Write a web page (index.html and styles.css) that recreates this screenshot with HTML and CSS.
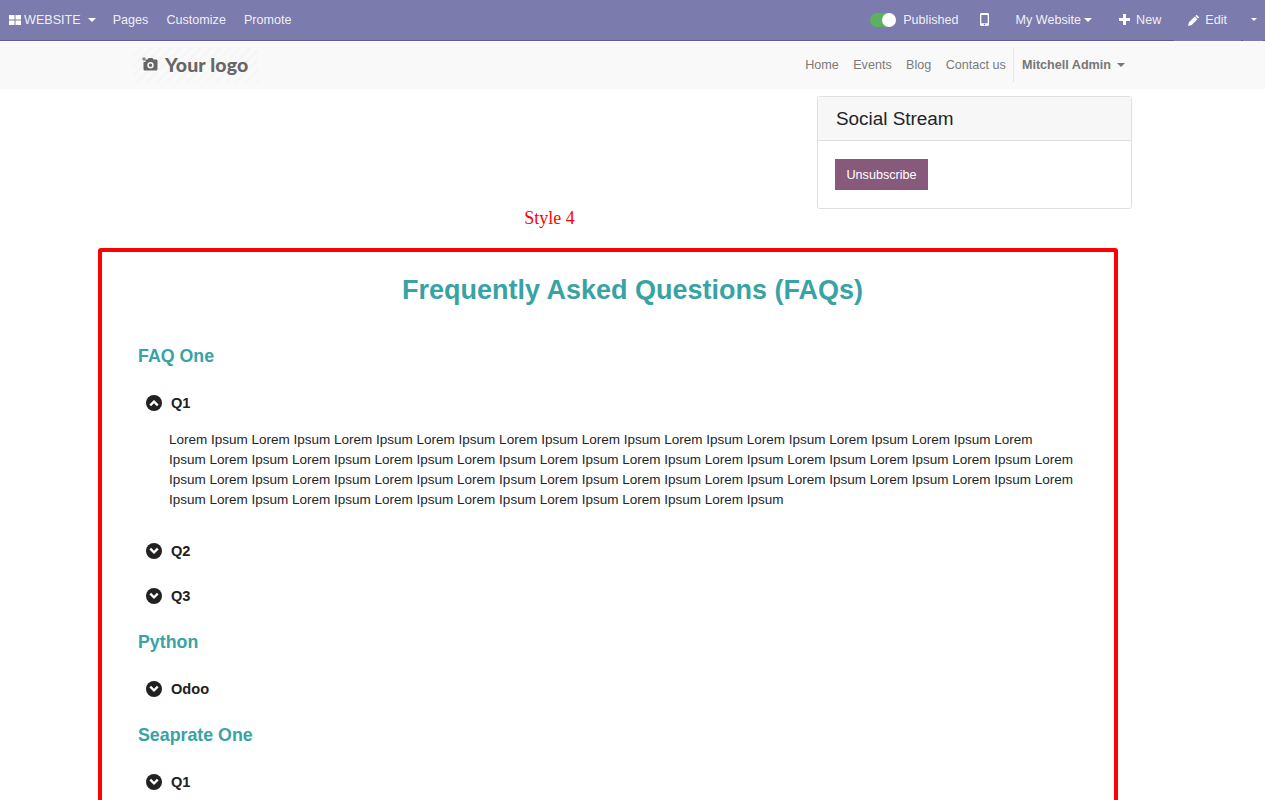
FILE: index.html
```html
<!DOCTYPE html>
<html lang="en">
<head>
<meta charset="utf-8">
<title>FAQ</title>
<link rel="stylesheet" href="styles.css">
</head>
<body>
<header>
  <nav class="topbar">
    <div class="topbar-left">
      <a class="top-item brand"><svg class="i-grid" width="12" height="10" viewBox="0 0 12 10"><rect x="0" y="0" width="5.5" height="4.5" fill="#fff"/><rect x="6.500" y="0" width="5.5" height="4.5" fill="#fff"/><rect x="0" y="5.5" width="5.5" height="4.5" fill="#fff"/><rect x="6.500" y="5.5" width="5.5" height="4.5" fill="#fff"/></svg>WEBSITE<span class="caret caret-brand"></span></a>
      <a class="top-item">Pages</a>
      <a class="top-item">Customize</a>
      <a class="top-item">Promote</a>
    </div>
    <div class="topbar-right">
      <a class="top-item publish"><span class="toggle"><span class="knob"></span></span>Published</a>
      <a class="top-item mobile"><svg width="9" height="13" viewBox="0 0 9 13"><path fill="#fff" fill-rule="evenodd" d="M1.400 0h6.200C8.400 0 9 .6 9 1.400v10.200c0 .8-.6 1.400-1.400 1.400H1.400C.6 13 0 12.400 0 11.600V1.400C0 .6.600 0 1.400 0zM1.300 2v8.300h6.400V2zM4.500 10.800a.8.8 0 1 0 0 1.600.8.8 0 0 0 0-1.600z"/></svg></a>
      <a class="top-item site">My Website<span class="caret caret-site"></span></a>
      <a class="top-item new"><svg width="11" height="11" viewBox="0 0 11 11"><path fill="#fff" d="M4 0h3v4h4v3H7v4H4V7H0V4h4z"/></svg>New</a>
      <a class="top-item edit"><svg width="12" height="12" viewBox="0 0 12 12"><path fill="#fff" d="M8.600.7l2.700 2.700-1.200 1.200-2.700-2.700zM6.700 2.600l2.700 2.700-5.700 5.700L0 12l1-3.700z"/></svg>Edit</a>
      <a class="top-item more"><span class="caret caret-small"></span></a>
    </div>
  </nav>
  <div class="sitebar">
    <div class="sitebar-inner">
      <a class="logo"><svg width="16" height="15" viewBox="0 0 16 15"><path fill="#666" fill-rule="evenodd" d="M5.500 2.500L6.500 1h4l1 1.500H14c.9 0 1.500.6 1.500 1.500v8c0 .9-.6 1.500-1.500 1.500H3c-.9 0-1.500-.6-1.500-1.500V5h2V2.500zM8.500 5a3.200 3.200 0 1 0 0 6.400 3.200 3.200 0 0 0 0-6.400zm0 1.500a1.700 1.700 0 1 1 0 3.400 1.700 1.700 0 0 1 0-3.400z"/><path fill="#666" d="M1.500 0h1v1.500H4v1H2.500V4h-1V2.500H0v-1h1.500z"/></svg><span class="logo-text">Your logo</span></a>
      <ul class="site-menu">
        <li><a>Home</a></li>
        <li><a>Events</a></li>
        <li><a>Blog</a></li>
        <li><a>Contact us</a></li>
        <li class="user"><a class="user-link">Mitchell Admin<span class="caret caret-user"></span></a></li>
      </ul>
    </div>
  </div>
</header>
<main>
  <div class="content">
    <aside class="card">
      <h3 class="card-head">Social Stream</h3>
      <div class="card-body"><button class="btn">Unsubscribe</button></div>
    </aside>
    <p class="style-label">Style 4</p>
  </div>
  <section class="faq-box">
    <h1 class="faq-title">Frequently Asked Questions (FAQs)</h1>
    <h2 class="faq-group first">FAQ One</h2>
    <div class="q"><svg class="chev" viewBox="0 0 16 16"><circle cx="8" cy="8" r="8" fill="#212121"/><path d="M3.400 9.500L8 4.900l4.600 4.600-1.700 1.700L8 8.300 5.100 11.200z" fill="#fff"/></svg>Q1</div>
    <p class="answer">Lorem Ipsum Lorem Ipsum Lorem Ipsum Lorem Ipsum Lorem Ipsum Lorem Ipsum Lorem Ipsum Lorem Ipsum Lorem Ipsum Lorem Ipsum Lorem<br>Ipsum Lorem Ipsum Lorem Ipsum Lorem Ipsum Lorem Ipsum Lorem Ipsum Lorem Ipsum Lorem Ipsum Lorem Ipsum Lorem Ipsum Lorem Ipsum Lorem<br>Ipsum Lorem Ipsum Lorem Ipsum Lorem Ipsum Lorem Ipsum Lorem Ipsum Lorem Ipsum Lorem Ipsum Lorem Ipsum Lorem Ipsum Lorem Ipsum Lorem<br>Ipsum Lorem Ipsum Lorem Ipsum Lorem Ipsum Lorem Ipsum Lorem Ipsum Lorem Ipsum Lorem Ipsum</p>
    <div class="q"><svg class="chev" viewBox="0 0 16 16"><circle cx="8" cy="8" r="8" fill="#212121"/><path d="M3.400 6.500L8 11.100l4.600-4.600-1.700-1.700L8 7.700 5.100 4.800z" fill="#fff"/></svg>Q2</div>
    <div class="q"><svg class="chev" viewBox="0 0 16 16"><circle cx="8" cy="8" r="8" fill="#212121"/><path d="M3.400 6.500L8 11.100l4.600-4.600-1.700-1.700L8 7.700 5.100 4.800z" fill="#fff"/></svg>Q3</div>
    <h2 class="faq-group">Python</h2>
    <div class="q"><svg class="chev" viewBox="0 0 16 16"><circle cx="8" cy="8" r="8" fill="#212121"/><path d="M3.400 6.500L8 11.100l4.600-4.600-1.700-1.700L8 7.700 5.100 4.800z" fill="#fff"/></svg>Odoo</div>
    <h2 class="faq-group">Seaprate One</h2>
    <div class="q"><svg class="chev" viewBox="0 0 16 16"><circle cx="8" cy="8" r="8" fill="#212121"/><path d="M3.400 6.500L8 11.100l4.600-4.600-1.700-1.700L8 7.700 5.100 4.800z" fill="#fff"/></svg>Q1</div>
  </section>
</main>
</body>
</html>
```
FILE: styles.css
```css
* { box-sizing: border-box; }
html, body { margin: 0; padding: 0; }
body { font-family: "Liberation Sans", Arial, sans-serif; font-size: 13.5px; color: #212529; background: #fff; }
a { color: inherit; text-decoration: none; }

.topbar { height: 41px; background: linear-gradient(to right, #5f5e97 1174px, transparent 1174px 1241px, #5f5e97 1241px 1243px, transparent 1243px 1263px, #5f5e97 1263px) bottom / 100% 1px no-repeat, #7c7bad; display: flex; justify-content: space-between; color: #fff; font-size: 12.6px; }
.topbar-left, .topbar-right { display: flex; align-items: center; height: 40px; padding-bottom: 1px; }
.top-item { display: flex; align-items: center; color: rgba(255,255,255,.9); white-space: nowrap; }
.brand { margin-left: 9px; margin-right: 17px; }
.i-grid { margin-right: 3px; }
.caret { display: inline-block; width: 0; height: 0; border-top: 4px solid #fff; border-left: 4px solid transparent; border-right: 4px solid transparent; }
.caret-brand { margin-left: 7px; }
.topbar-left .top-item + .top-item { margin-right: 18px; }
.publish { margin-right: 21px; }
.toggle { width: 26px; height: 14px; border-radius: 7px; background: #5cb05f; position: relative; margin-right: 7px; }
.knob { position: absolute; right: 0; top: 0; width: 14px; height: 14px; border-radius: 50%; background: #fff; }
.mobile { margin-right: 27px; }
.site { margin-right: 27px; }
.caret-site { margin-left: 3px; }
.new svg { margin-right: 6px; }
.new { margin-right: 27px; }
.edit svg { margin-right: 5px; }
.edit { margin-right: 24px; }
.caret-small { border-top-width: 3px; border-left-width: 3px; border-right-width: 3px; }
.more { margin-right: 8px; }

.sitebar { height: 48px; background: #f9f9f9; }
.sitebar-inner { width: 999px; margin: 0 auto; height: 48px; display: flex; justify-content: space-between; align-items: center; }
.logo { width: 125px; height: 34px; display: flex; align-items: center; padding: 0 0 1px 9px; background: repeating-linear-gradient(135deg, #f9f9f9 0 5px, #f5f5f5 5px 7px); }
.logo-text { font-family: "Lato", sans-serif; font-weight: 900; font-size: 19.5px; letter-spacing: .15px; color: #666; margin-left: 7px; }
.site-menu { list-style: none; margin: 0; padding: 0 0 1px; display: flex; align-items: center; color: #7b7b7b; font-size: 12.6px; }
.site-menu li { margin-left: 14.4px; }
.site-menu .user { margin-left: 7px; border-left: 1px solid #e7e7e7; height: 34px; display: flex; align-items: center; padding-left: 8px; padding-right: 7px; font-weight: 700; color: #777; }
.user-link { display: flex; align-items: center; }
.caret-user { margin-left: 6px; border-top-color: #777; }

.content { width: 999px; margin: 0 auto; }
.card { width: 315px; height: 113px; margin: 7px 0 0 auto; border: 1px solid #dfdfdf; border-radius: 3px; }
.card-head { margin: 0; height: 44px; padding: 0 18px; background: #f7f7f7; border-bottom: 1px solid #dfdfdf; font-size: 18.9px; font-weight: 400; line-height: 43px; color: #212529; }
.card-body { padding: 18px 17px; }
.btn { width: 93px; height: 31px; border: 0; background: #875a7b; color: #fff; font: 12.6px "Liberation Sans", Arial, sans-serif; padding: 0; }
.style-label { margin: 0; padding-right: 166px; text-align: center; font-family: "Liberation Serif", serif; font-size: 18px; line-height: 18px; color: #f00; }

.faq-box { width: 1020px; margin: 21px 0 30px 98px; padding: 0 0 40px 36px; border: 4px solid #f00; border-radius: 3px; }
.faq-title { margin: 21px -13px 0 0; text-align: center; font-size: 27px; line-height: 34px; color: #38a3a5; }
.faq-group { margin: 0; padding: 14px 0 14px; font-size: 17.8px; line-height: 20px; color: #38a3a5; }
.faq-group.first { margin-top: 25px; }
.q { height: 45px; display: flex; align-items: center; padding-left: 8px; font-size: 14.6px; font-weight: 700; color: #212121; }
.chev { width: 16px; height: 16px; margin-right: 9px; }
.answer { margin: 5px 0 18px 31px; font-size: 13.5px; line-height: 20px; color: #212529; white-space: nowrap; }
```
